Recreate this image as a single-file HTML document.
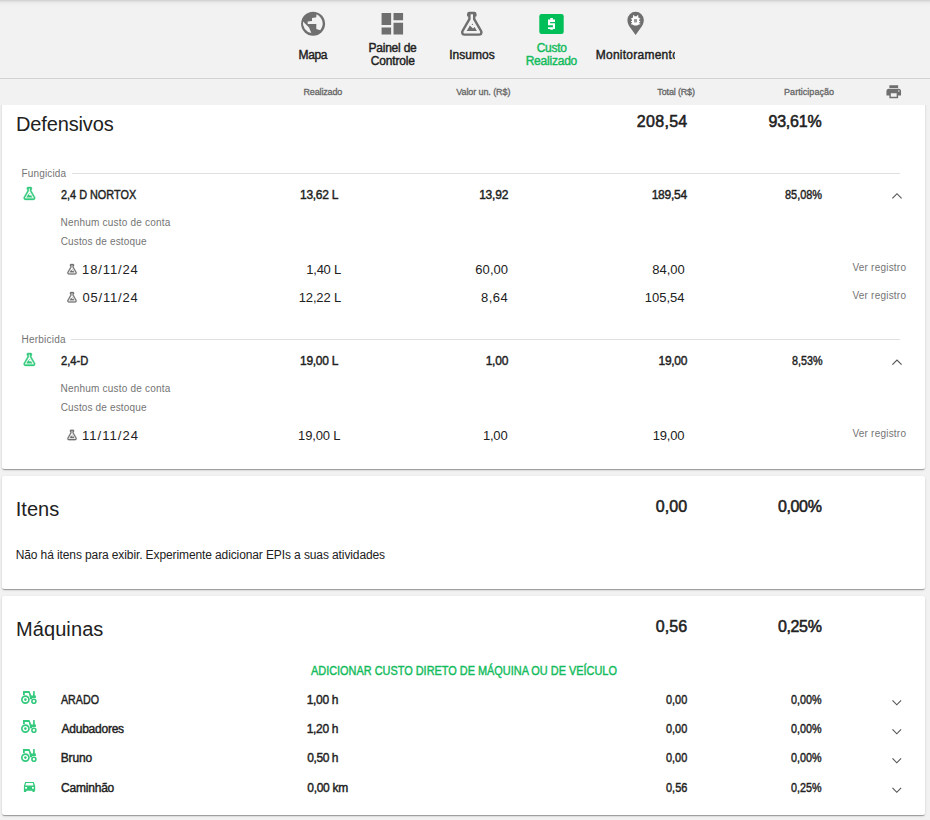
<!DOCTYPE html>
<html><head><meta charset="utf-8"><style>
html,body{margin:0;padding:0;}
body{width:930px;height:820px;overflow:hidden;position:relative;background:#f2f2f2;font-family:"Liberation Sans",sans-serif;color:#212121;}
.t{position:absolute;white-space:nowrap;}
.topsh{position:absolute;left:0;top:0;width:930px;height:8px;background:linear-gradient(#cfcfcf,#e6e6e6 2px,#efefef 4px,#f2f2f2 7px);}
.hline{position:absolute;left:0;top:78px;width:930px;height:1px;background:#d3d3d3;}
.hline2{position:absolute;left:0;top:79px;width:930px;height:1px;background:#ebebeb;}
.card{position:absolute;left:2px;width:923px;background:#fff;border-radius:2.5px;box-shadow:0 2px 1px -1px rgba(0,0,0,.2),0 1px 1px 0 rgba(0,0,0,.14),0 1px 3px 0 rgba(0,0,0,.12);}
.hdr{position:absolute;left:0;top:79px;width:930px;height:26px;background:#f2f2f2;}
.dl{position:absolute;height:1px;background:#e0e0e0;}
svg{position:absolute;left:0;top:0;}
</style></head><body>
<div class="topsh"></div>
<div class="card" style="top:90px;height:379px;"></div>
<div class="card" style="top:476px;height:113px;"></div>
<div class="card" style="top:596px;height:219px;"></div>
<div class="hdr"></div>
<div class="hline"></div>
<div class="dl" style="left:72px;top:173px;width:828px;"></div>
<div class="dl" style="left:71px;top:339px;width:829px;"></div>
<svg width="930" height="820" viewBox="0 0 930 820">
<!-- globe -->
<g transform="translate(301.1,11.7)">
 <circle cx="12" cy="12" r="12" fill="#6f6f6f"/>
 
 <path d="M15.4,2.4 L15.2,5.6 L14.4,5.7 L10.9,6.3 L10.9,9.2 L6.6,9.8 L6.6,12.3 L15.2,12.3 L15.2,17.4 L19.1,18.6 A10.2,10.2 0 0 0 15.4,2.6 Z" fill="#f2f2f2"/>
 <path d="M1.9,9.8 L7.9,15.8 L10.3,21.4 A10.2,10.2 0 0 1 1.9,9.8 Z" fill="#f2f2f2"/>
</g>
<!-- dashboard -->
<g transform="translate(378,9.5) scale(1.194)" fill="#6f6f6f"><path d="M3 13h8V3H3v10zm0 8h8v-6H3v6zm10 0h8V11h-8v10zm0-18v6h8V3h-8z"/></g>
<!-- flask nav -->
<g transform="translate(457.4,9.4) scale(1.2)" fill="#6f6f6f"><path id="flask" d="M5,19A1,1 0 0,0 6,20H18A1,1 0 0,0 19,19C19,18.79 18.93,18.59 18.82,18.43L13,8.35V4H11V8.35L5.18,18.43C5.07,18.59 5,18.79 5,19M6,22A3,3 0 0,1 3,19C3,18.4 3.18,17.84 3.5,17.37L9,7.81V6A1,1 0 0,1 8,5V4A2,2 0 0,1 10,2H14A2,2 0 0,1 16,4V5A1,1 0 0,1 15,6V7.81L20.5,17.37C20.82,17.840 21,18.4 21,19A3,3 0 0,1 18,22H6M13,16L14.34,14.66L16.27,18H7.73L10.39,13.39L13,16M12.5,12A0.5,0.5 0 0,1 13,12.5A0.5,0.5 0 0,1 12.5,13A0.5,0.5 0 0,1 12,12.5A0.5,0.5 0 0,1 12.5,12Z"/></g>
<!-- money -->
<rect x="539.3" y="14.1" width="24.4" height="19.8" rx="2.2" fill="#00bf58"/>
<path d="M548,19.6H555V21.9H550.1V23.2H555V28.9H548V27.2H552.9V25.3H548Z M550.3,18.1H552.9V19.6H550.3Z M550.3,28.9H552.9V29.8H550.3Z" fill="#fff"/>
<!-- pin -->
<path d="M635.6,11.8 A8.2,8.2 0 0 1 643.8,20 C643.8,23.2 642.5,25.6 641,27.6 L635.6,35.1 L630.2,27.6 C628.7,25.6 627.4,23.2 627.4,20 A8.2,8.2 0 0 1 635.6,11.8 Z" fill="#6f6f6f"/>
<g fill="#fff">
 <path d="M633,17.9 V15.2 H634.2 V16.3 H637.1 V15.2 H638.3 V17.9 Z"/>
 <path d="M632,17.8 H639.2 V23 C639.2,24.6 637.6,25.6 635.6,25.6 C633.6,25.6 632,24.6 632,23 Z"/>
 <rect x="631" y="18.3" width="9.2" height="1.1"/>
 <rect x="631" y="21" width="9.2" height="1.1"/>
 <rect x="631" y="23.3" width="9.2" height="1.1"/>
</g>
<rect x="634" y="19.1" width="3" height="3.3" fill="#9a9a9a"/>
<!-- printer -->
<g transform="translate(885,83) scale(0.729)" fill="#6f6f6f"><path d="M19 8H5c-1.66 0-3 1.34-3 3v6h4v4h12v-4h4v-6c0-1.66-1.34-3-3-3zm-3 11H8v-5h8v5zm3-7c-.55 0-1-.45-1-1s.45-1 1-1 1 .45 1 1-.45 1-1 1zm-1-9H6v4h12V3z"/></g>
<!-- row flasks green -->
<g transform="translate(21.66,185.7) scale(0.646)" fill="#33ca7d" stroke="#33ca7d" stroke-width="0.6"><use href="#flask"/></g>
<g transform="translate(21.66,351.7) scale(0.646)" fill="#33ca7d" stroke="#33ca7d" stroke-width="0.6"><use href="#flask"/></g>
<!-- sub row flasks gray -->
<g transform="translate(65.7,262.9) scale(0.525)" fill="#6f6f6f" stroke="#6f6f6f" stroke-width="0.5"><use href="#flask"/></g>
<g transform="translate(65.7,290.9) scale(0.525)" fill="#6f6f6f" stroke="#6f6f6f" stroke-width="0.5"><use href="#flask"/></g>
<g transform="translate(65.7,428.6) scale(0.525)" fill="#6f6f6f" stroke="#6f6f6f" stroke-width="0.5"><use href="#flask"/></g>
<!-- chevrons -->
<g fill="none" stroke="#555" stroke-width="1.15">
 <path d="M892.4,198.4 L897,193.7 L901.6,198.4"/>
 <path d="M892.4,364.7 L897,360 L901.6,364.7"/>
 <path d="M892.5,700.4 L896.8,704.8 L901.1,700.4"/>
 <path d="M892.5,729.4 L896.8,733.8 L901.1,729.4"/>
 <path d="M892.5,758.4 L896.8,762.8 L901.1,758.4"/>
 <path d="M892.5,787.9 L896.8,792.3 L901.1,787.9"/>
</g>
<!-- tractors -->
<defs>
<g id="tractor" fill="#33ca7d">
 <circle cx="25.4" cy="699.6" r="3.55" fill="none" stroke="#33ca7d" stroke-width="1.7"/>
 <circle cx="25.4" cy="699.6" r="1.3"/>
 <circle cx="33.9" cy="701.2" r="2.0" fill="none" stroke="#33ca7d" stroke-width="1.6"/>
 <path d="M23,691.1 H29.4 L31.4,695.4 H33 L33.2,691 H34.7 L34.8,695.4 H35.9 V698.1 H32.2 V699.2 H30.1 C30,697.8 29.8,696.6 29.5,695.9 L28.7,693 H24.8 V695.1 H23 Z"/>
</g>
</defs>
<use href="#tractor"/>
<use href="#tractor" y="29"/>
<use href="#tractor" y="58"/>
<!-- car -->
<g fill="#33ca7d">
 <path d="M25.1,781.9 H33.8 L35.2,785.9 V790.8 H34.6 V791.9 H32.5 V790.8 H26.3 V791.9 H23.9 V785.9 Z M26,783.1 L25.4,785.5 H33.4 L32.9,783.1 Z" fill-rule="evenodd"/>
</g>
<g fill="#fff">
 <rect x="25.1" y="787" width="1.9" height="1.7"/>
 <rect x="32" y="787" width="1.8" height="1.7"/>
</g>
</svg>

<div class="t" style="left:298.56px;top:48.72px;font-size:12px;line-height:12px;-webkit-text-stroke:0.41px currentColor;letter-spacing:-0.401px;">Mapa</div><div class="t" style="left:368.46px;top:41.72px;font-size:12px;line-height:12px;-webkit-text-stroke:0.41px currentColor;letter-spacing:-0.213px;">Painel de</div><div class="t" style="left:370.67px;top:55.12px;font-size:12px;line-height:12px;-webkit-text-stroke:0.41px currentColor;letter-spacing:-0.142px;">Controle</div><div class="t" style="left:449.14px;top:48.72px;font-size:12px;line-height:12px;-webkit-text-stroke:0.41px currentColor;letter-spacing:0.043px;">Insumos</div><div class="t" style="left:536.77px;top:41.72px;font-size:12px;line-height:12px;-webkit-text-stroke:0.41px currentColor;color:#12bb5c;letter-spacing:-0.316px;">Custo</div><div class="t" style="left:525.66px;top:55.12px;font-size:12px;line-height:12px;-webkit-text-stroke:0.41px currentColor;color:#12bb5c;letter-spacing:-0.219px;">Realizado</div><div class="t" style="left:595.76px;top:48.72px;font-size:12px;line-height:12px;-webkit-text-stroke:0.41px currentColor;letter-spacing:0.251px;width:79.04px;overflow:hidden;">Monitoramento</div><div class="t" style="left:303.47px;top:87.90px;font-size:9px;line-height:9px;-webkit-text-stroke:0.31px currentColor;color:#666666;letter-spacing:-0.150px;">Realizado</div><div class="t" style="left:456.29px;top:87.90px;font-size:9px;line-height:9px;-webkit-text-stroke:0.31px currentColor;color:#666666;letter-spacing:-0.096px;">Valor un. (R$)</div><div class="t" style="left:657.37px;top:87.90px;font-size:9px;line-height:9px;-webkit-text-stroke:0.31px currentColor;color:#666666;letter-spacing:-0.163px;">Total (R$)</div><div class="t" style="left:784.07px;top:87.90px;font-size:9px;line-height:9px;-webkit-text-stroke:0.31px currentColor;color:#666666;letter-spacing:0.040px;">Participação</div><div class="t" style="left:16.05px;top:113.81px;font-size:20px;line-height:20px;letter-spacing:-0.143px;">Defensivos</div><div class="t" style="left:636.78px;top:113.55px;font-size:16px;line-height:16px;-webkit-text-stroke:0.54px currentColor;letter-spacing:0.309px;">208,54</div><div class="t" style="left:768.47px;top:113.55px;font-size:16px;line-height:16px;-webkit-text-stroke:0.54px currentColor;letter-spacing:-0.208px;">93,61%</div><div class="t" style="left:21.50px;top:169.44px;font-size:10px;line-height:10px;color:#747474;letter-spacing:0.157px;">Fungicida</div><div class="t" style="left:60.97px;top:189.12px;font-size:12px;line-height:12px;-webkit-text-stroke:0.41px currentColor;transform:scaleX(0.9061);transform-origin:0 0;">2,4 D NORTOX</div><div class="t" style="left:300.03px;top:189.12px;font-size:12px;line-height:12px;-webkit-text-stroke:0.41px currentColor;letter-spacing:-0.276px;">13,62 L</div><div class="t" style="left:479.13px;top:189.12px;font-size:12px;line-height:12px;-webkit-text-stroke:0.41px currentColor;letter-spacing:-0.200px;">13,92</div><div class="t" style="left:651.63px;top:189.12px;font-size:12px;line-height:12px;-webkit-text-stroke:0.41px currentColor;letter-spacing:-0.240px;">189,54</div><div class="t" style="left:784.59px;top:189.12px;font-size:12px;line-height:12px;-webkit-text-stroke:0.41px currentColor;transform:scaleX(0.9101);transform-origin:0 0;">85,08%</div><div class="t" style="left:60.46px;top:218.04px;font-size:10px;line-height:10px;color:#747474;letter-spacing:0.208px;">Nenhum custo de conta</div><div class="t" style="left:60.66px;top:236.64px;font-size:10px;line-height:10px;color:#747474;letter-spacing:0.151px;">Custos de estoque</div><div class="t" style="left:82.09px;top:263.14px;font-size:13px;line-height:13px;letter-spacing:0.873px;">18/11/24</div><div class="t" style="left:306.29px;top:263.14px;font-size:13px;line-height:13px;letter-spacing:-0.243px;">1,40 L</div><div class="t" style="left:475.32px;top:263.14px;font-size:13px;line-height:13px;letter-spacing:0.054px;">60,00</div><div class="t" style="left:652.22px;top:263.14px;font-size:13px;line-height:13px;">84,00</div><div class="t" style="left:852.43px;top:263.14px;font-size:10px;line-height:10px;color:#747474;letter-spacing:0.220px;">Ver registro</div><div class="t" style="left:82.38px;top:291.14px;font-size:13px;line-height:13px;letter-spacing:0.832px;">05/11/24</div><div class="t" style="left:298.69px;top:291.14px;font-size:13px;line-height:13px;letter-spacing:-0.129px;">12,22 L</div><div class="t" style="left:480.92px;top:291.14px;font-size:13px;line-height:13px;letter-spacing:0.541px;">8,64</div><div class="t" style="left:644.69px;top:291.14px;font-size:13px;line-height:13px;letter-spacing:0.022px;">105,54</div><div class="t" style="left:852.43px;top:290.94px;font-size:10px;line-height:10px;color:#747474;letter-spacing:0.220px;">Ver registro</div><div class="t" style="left:21.50px;top:335.14px;font-size:10px;line-height:10px;color:#747474;letter-spacing:0.219px;">Herbicida</div><div class="t" style="left:60.96px;top:354.82px;font-size:12px;line-height:12px;-webkit-text-stroke:0.41px currentColor;transform:scaleX(0.9307);transform-origin:0 0;">2,4-D</div><div class="t" style="left:300.03px;top:354.82px;font-size:12px;line-height:12px;-webkit-text-stroke:0.41px currentColor;letter-spacing:-0.276px;">19,00 L</div><div class="t" style="left:485.63px;top:354.82px;font-size:12px;line-height:12px;-webkit-text-stroke:0.41px currentColor;letter-spacing:-0.224px;">1,00</div><div class="t" style="left:658.53px;top:354.82px;font-size:12px;line-height:12px;-webkit-text-stroke:0.41px currentColor;letter-spacing:-0.275px;">19,00</div><div class="t" style="left:791.50px;top:354.82px;font-size:12px;line-height:12px;-webkit-text-stroke:0.41px currentColor;transform:scaleX(0.8969);transform-origin:0 0;">8,53%</div><div class="t" style="left:60.46px;top:384.24px;font-size:10px;line-height:10px;color:#747474;letter-spacing:0.208px;">Nenhum custo de conta</div><div class="t" style="left:60.66px;top:403.24px;font-size:10px;line-height:10px;color:#747474;letter-spacing:0.151px;">Custos de estoque</div><div class="t" style="left:82.09px;top:428.84px;font-size:13px;line-height:13px;letter-spacing:1.016px;">11/11/24</div><div class="t" style="left:298.09px;top:428.84px;font-size:13px;line-height:13px;letter-spacing:-0.146px;">19,00 L</div><div class="t" style="left:482.89px;top:428.84px;font-size:13px;line-height:13px;letter-spacing:-0.171px;">1,00</div><div class="t" style="left:652.69px;top:428.84px;font-size:13px;line-height:13px;letter-spacing:-0.166px;">19,00</div><div class="t" style="left:852.43px;top:428.84px;font-size:10px;line-height:10px;color:#747474;letter-spacing:0.220px;">Ver registro</div><div class="t" style="left:15.79px;top:499.21px;font-size:20px;line-height:20px;letter-spacing:0.019px;">Itens</div><div class="t" style="left:655.85px;top:498.75px;font-size:16px;line-height:16px;-webkit-text-stroke:0.54px currentColor;letter-spacing:0.057px;">0,00</div><div class="t" style="left:777.95px;top:498.75px;font-size:16px;line-height:16px;-webkit-text-stroke:0.54px currentColor;letter-spacing:-0.353px;">0,00%</div><div class="t" style="left:15.69px;top:548.94px;font-size:12px;line-height:12px;letter-spacing:-0.108px;">Não há itens para exibir. Experimente adicionar EPIs a suas atividades</div><div class="t" style="left:15.95px;top:618.81px;font-size:20px;line-height:20px;letter-spacing:0.101px;">Máquinas</div><div class="t" style="left:655.85px;top:619.25px;font-size:16px;line-height:16px;-webkit-text-stroke:0.54px currentColor;letter-spacing:0.072px;">0,56</div><div class="t" style="left:777.95px;top:619.25px;font-size:16px;line-height:16px;-webkit-text-stroke:0.54px currentColor;letter-spacing:-0.353px;">0,25%</div><div class="t" style="left:311.27px;top:665.12px;font-size:12px;line-height:12px;-webkit-text-stroke:0.41px currentColor;color:#12bb5c;transform:scaleX(0.9096);transform-origin:0 0;">ADICIONAR CUSTO DIRETO DE MÁQUINA OU DE VEÍCULO</div><div class="t" style="left:61.47px;top:693.52px;font-size:12px;line-height:12px;-webkit-text-stroke:0.41px currentColor;transform:scaleX(0.8894);transform-origin:0 0;">ARADO</div><div class="t" style="left:306.73px;top:693.52px;font-size:12px;line-height:12px;-webkit-text-stroke:0.41px currentColor;letter-spacing:-0.320px;">1,00 h</div><div class="t" style="left:665.96px;top:693.52px;font-size:12px;line-height:12px;-webkit-text-stroke:0.41px currentColor;transform:scaleX(0.9092);transform-origin:0 0;">0,00</div><div class="t" style="left:791.46px;top:693.52px;font-size:12px;line-height:12px;-webkit-text-stroke:0.41px currentColor;transform:scaleX(0.8979);transform-origin:0 0;">0,00%</div><div class="t" style="left:61.47px;top:722.62px;font-size:12px;line-height:12px;-webkit-text-stroke:0.41px currentColor;letter-spacing:-0.230px;">Adubadores</div><div class="t" style="left:306.73px;top:722.62px;font-size:12px;line-height:12px;-webkit-text-stroke:0.41px currentColor;letter-spacing:-0.320px;">1,20 h</div><div class="t" style="left:665.96px;top:722.62px;font-size:12px;line-height:12px;-webkit-text-stroke:0.41px currentColor;transform:scaleX(0.9092);transform-origin:0 0;">0,00</div><div class="t" style="left:791.46px;top:722.62px;font-size:12px;line-height:12px;-webkit-text-stroke:0.41px currentColor;transform:scaleX(0.8979);transform-origin:0 0;">0,00%</div><div class="t" style="left:60.66px;top:751.72px;font-size:12px;line-height:12px;-webkit-text-stroke:0.41px currentColor;letter-spacing:-0.098px;">Bruno</div><div class="t" style="left:307.24px;top:751.72px;font-size:12px;line-height:12px;-webkit-text-stroke:0.41px currentColor;letter-spacing:-0.420px;">0,50 h</div><div class="t" style="left:665.96px;top:751.72px;font-size:12px;line-height:12px;-webkit-text-stroke:0.41px currentColor;transform:scaleX(0.9092);transform-origin:0 0;">0,00</div><div class="t" style="left:791.46px;top:751.72px;font-size:12px;line-height:12px;-webkit-text-stroke:0.41px currentColor;transform:scaleX(0.8979);transform-origin:0 0;">0,00%</div><div class="t" style="left:61.07px;top:781.52px;font-size:12px;line-height:12px;-webkit-text-stroke:0.41px currentColor;letter-spacing:-0.209px;">Caminhão</div><div class="t" style="left:307.24px;top:781.52px;font-size:12px;line-height:12px;-webkit-text-stroke:0.41px currentColor;letter-spacing:-0.272px;">0,00 km</div><div class="t" style="left:665.96px;top:781.52px;font-size:12px;line-height:12px;-webkit-text-stroke:0.41px currentColor;transform:scaleX(0.9130);transform-origin:0 0;">0,56</div><div class="t" style="left:791.46px;top:781.52px;font-size:12px;line-height:12px;-webkit-text-stroke:0.41px currentColor;transform:scaleX(0.8979);transform-origin:0 0;">0,25%</div>
</body></html>
